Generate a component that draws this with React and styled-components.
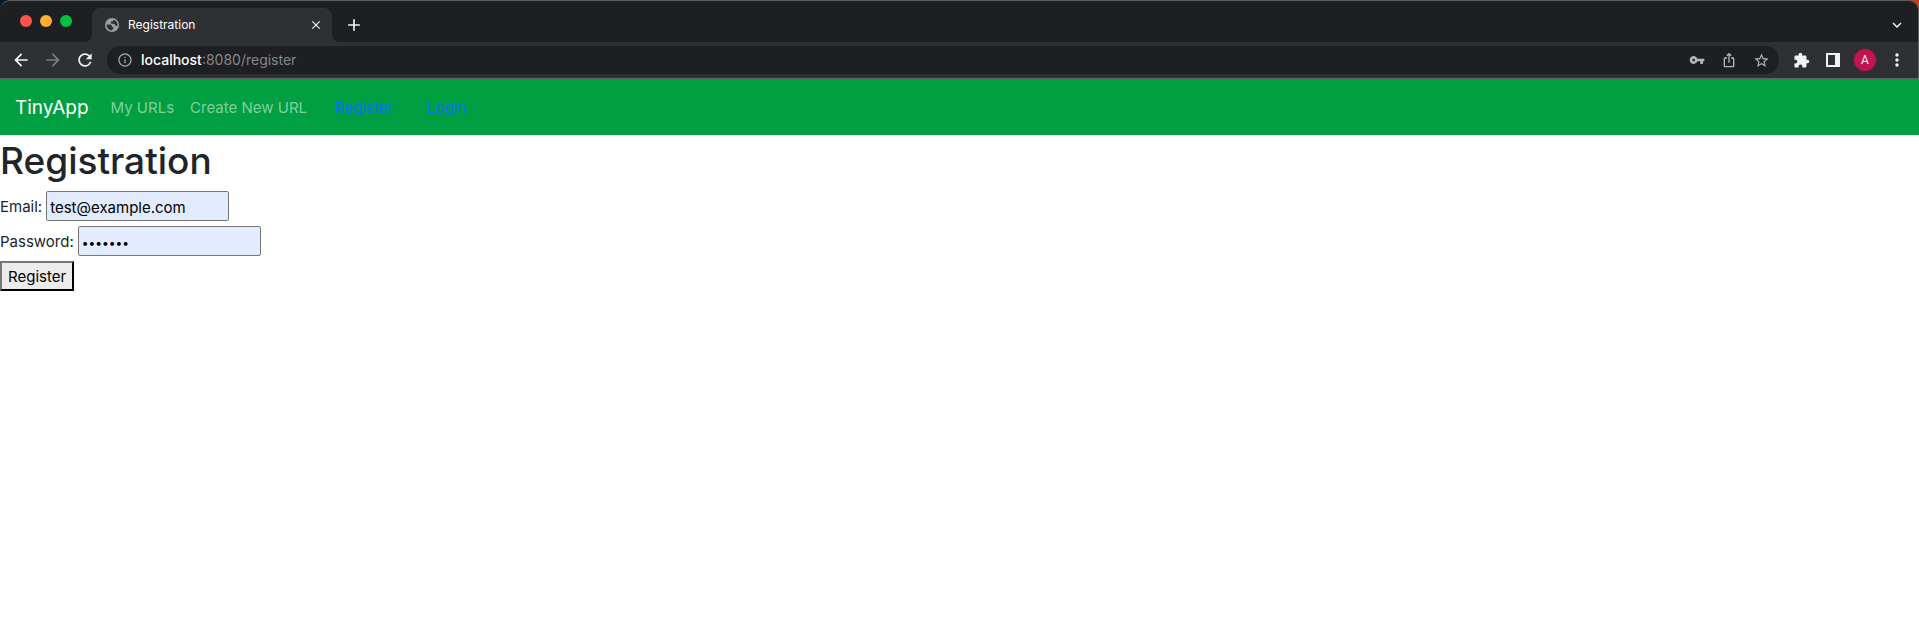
import React from "react";
import styled, { createGlobalStyle } from "styled-components";
import {
  MdAdd, MdArrowBack, MdArrowForward, MdClose, MdExpandMore, MdExtension,
  MdInfoOutline, MdIosShare, MdMoreVert, MdRefresh, MdStarOutline, MdVpnKey,
} from "react-icons/md";

const GlobalStyle = createGlobalStyle`
  *, *::before, *::after { box-sizing: border-box; }
  body {
    margin: 0;
    background: #ffffff;
    color: #212529;
    font: 400 15px/24px Inter, "Liberation Sans", sans-serif;
  }
  button, input { font: inherit; }
`;

const Backdrop = styled.div`
  background: linear-gradient(90deg, #06182c 50%, #c93a20 50%);
`;

const Chrome = styled.header`
  background: #1e1f21;
  border: 1px solid #5d5e60;
  border-width: 1px 1px 1px 0;
  border-radius: 10px 10px 0 0;
  overflow: hidden;
`;

const TabStrip = styled.div`
  display: flex;
  align-items: flex-end;
  height: 41px;
  padding: 0 5px 0 20px;
`;

const Lights = styled.div`
  display: flex;
  align-self: flex-start;
  gap: 8px;
  margin: 14px 20px 0 0;
`;

const Light = styled.span`
  width: 12px;
  height: 12px;
  border-radius: 50%;
  background: ${(p) => p.$color};
`;

const Tab = styled.div`
  position: relative;
  display: flex;
  align-items: center;
  width: 240px;
  height: 34px;
  padding: 0 8px 0 13px;
  border-radius: 8px 8px 0 0;
  background: #2f3033;
  color: #ffffff;
  font-size: 12px;
  line-height: 16px;

  &::before, &::after {
    content: "";
    position: absolute;
    bottom: 0;
    width: 8px;
    height: 8px;
  }
  &::before {
    right: 100%;
    background: radial-gradient(circle at 0 0, #1e1f21 8px, #2f3033 8px);
  }
  &::after {
    left: 100%;
    background: radial-gradient(circle at 100% 0, #1e1f21 8px, #2f3033 8px);
  }
`;

const TabTitle = styled.span`
  flex: 1;
  margin-left: 9px;
`;

const IconButton = styled.button`
  display: flex;
  flex: none;
  align-items: center;
  justify-content: center;
  width: ${(p) => p.$width || 32}px;
  height: ${(p) => p.$height || 28}px;
  padding: 0;
  border: 0;
  background: none;
  color: ${(p) => p.$color || "#f1f3f4"};
`;

const Spacer = styled.div`
  flex: 1;
`;

const Toolbar = styled.div`
  display: flex;
  align-items: center;
  height: 36px;
  padding: 0 5px;
  background: #2f3033;
`;

const Omnibox = styled.div`
  display: flex;
  flex: 1;
  align-items: center;
  height: 28px;
  margin: 0 6px;
  padding: 0 2px;
  border-radius: 14px;
  background: #1e1f21;
`;

const Address = styled.span`
  flex: 1;
  color: #85878a;
  font-size: 14px;
  line-height: 20px;

  strong {
    color: #ffffff;
    font-weight: 500;
  }
`;

const Avatar = styled.span`
  width: 22px;
  height: 22px;
  border-radius: 50%;
  background: #c2154f;
  font: 400 12px/22px Roboto, sans-serif;
  text-align: center;
`;

const Navbar = styled.nav`
  display: flex;
  align-items: center;
  height: 56px;
  padding: 2px 15px 0;
  background: #009f41;
`;

const Brand = styled.a`
  margin-right: 22px;
  color: #ffffff;
  font-size: 19px;
  line-height: 30px;
  text-decoration: none;
`;

const NavLinks = styled.div`
  display: flex;
  gap: 16px;
  margin-right: 28px;
`;

const NavLink = styled.a`
  color: #80cfa0;
  text-decoration: none;
`;

const AccountLinks = styled.div`
  display: flex;
  gap: 34px;
`;

const AccountLink = styled.a`
  color: #0d6efd;
  text-decoration: none;
`;

const Title = styled.h1`
  margin: 0;
  padding: 2px 0 6px;
  font-size: 37px;
  font-weight: 500;
  line-height: 48px;
`;

const Form = styled.form`
  display: flex;
  flex-direction: column;
  align-items: flex-start;
  gap: 5px;
`;

const Field = styled.div`
  display: flex;
  align-items: center;
  gap: 4px;
`;

const Label = styled.label`
  padding-top: 2px;
`;

const TextInput = styled.input`
  width: 183px;
  height: 30px;
  padding: 2px 3px 0;
  border: 1px solid #767676;
  border-radius: 2px;
  background: #e3ecfe;
  color: #000000;

  &[type="password"] {
    font-size: 12px;
  }
`;

const Submit = styled.button`
  height: 30px;
  padding: 2px 6px 0;
  border: 2px outset #767676;
  border-color: #767676 #212121 #212121 #767676;
  background: #ececec;
  color: #000000;
  line-height: 24px;
`;

function Globe() {
  return (
    <svg width="14" height="14" viewBox="0 0 14 14" aria-hidden="true">
      <circle cx="7" cy="7" r="7" fill="#9aa0a6" />
      <path
        d="M1.6 6.6h3.2c1.3 0 2 .7 2 1.7v.6h1.6v1.3c0 .8-.6 1.2-1.3 1.2v1.2C3.9 12.5 1.5 10 1.6 6.6zM8.3 1.7v.6c0 .8-.6 1.3-1.3 1.3H5.9v1.2c0 .6.4.9.9.9h1.9c1 0 1.4.8 1.4 1.5v.6h1.2c.5 0 .8.3 1 .6.9-2.700-.6-5.700-4-6.700z"
        fill="#2f3033"
      />
    </svg>
  );
}

function SidePanel() {
  return (
    <svg width="14" height="14" viewBox="0 0 14 14" aria-hidden="true">
      <path d="M0 0h14v14H0zM2 2v10h7V2z" fill="currentColor" fillRule="evenodd" />
    </svg>
  );
}

export default function App() {
  return (
    <>
      <GlobalStyle />
      <Backdrop>
        <Chrome>
          <TabStrip>
            <Lights>
              <Light $color="#ff544d" />
              <Light $color="#ffb032" />
              <Light $color="#00c440" />
            </Lights>
            <Tab>
              <Globe />
              <TabTitle>Registration</TabTitle>
              <IconButton $width={16} $height={16} aria-label="Close tab"><MdClose size={14} /></IconButton>
            </Tab>
            <IconButton $width={44} $height={34} aria-label="New tab"><MdAdd size={20} /></IconButton>
            <Spacer />
            <IconButton $height={34} aria-label="Search tabs"><MdExpandMore size={18} /></IconButton>
          </TabStrip>
          <Toolbar>
            <IconButton aria-label="Back"><MdArrowBack size={20} /></IconButton>
            <IconButton aria-label="Forward" $color="#7d7e80"><MdArrowForward size={20} /></IconButton>
            <IconButton aria-label="Reload"><MdRefresh size={20} /></IconButton>
            <Omnibox>
              <IconButton aria-label="Site information" $color="#9aa0a6"><MdInfoOutline size={16} /></IconButton>
              <Address><strong>localhost</strong>:8080/register</Address>
              <IconButton aria-label="Passwords" $color="#b5b6b8"><MdVpnKey size={16} /></IconButton>
              <IconButton aria-label="Share" $color="#b5b6b8"><MdIosShare size={16} /></IconButton>
              <IconButton aria-label="Bookmark" $color="#b5b6b8"><MdStarOutline size={17} /></IconButton>
            </Omnibox>
            <IconButton aria-label="Extensions"><MdExtension size={17} /></IconButton>
            <IconButton aria-label="Side panel"><SidePanel /></IconButton>
            <IconButton aria-label="Profile"><Avatar>A</Avatar></IconButton>
            <IconButton aria-label="Menu"><MdMoreVert size={20} /></IconButton>
          </Toolbar>
        </Chrome>
      </Backdrop>
      <Navbar>
        <Brand href="#">TinyApp</Brand>
        <NavLinks>
          <NavLink href="#">My URLs</NavLink>
          <NavLink href="#">Create New URL</NavLink>
        </NavLinks>
        <AccountLinks>
          <AccountLink href="#">Register</AccountLink>
          <AccountLink href="#">Login</AccountLink>
        </AccountLinks>
      </Navbar>
      <main>
        <Title>Registration</Title>
        <Form>
          <Field>
            <Label htmlFor="email">Email:</Label>
            <TextInput id="email" type="email" defaultValue="test@example.com" />
          </Field>
          <Field>
            <Label htmlFor="password">Password:</Label>
            <TextInput id="password" type="password" defaultValue="1234567" />
          </Field>
          <Submit type="button">Register</Submit>
        </Form>
      </main>
    </>
  );
}
